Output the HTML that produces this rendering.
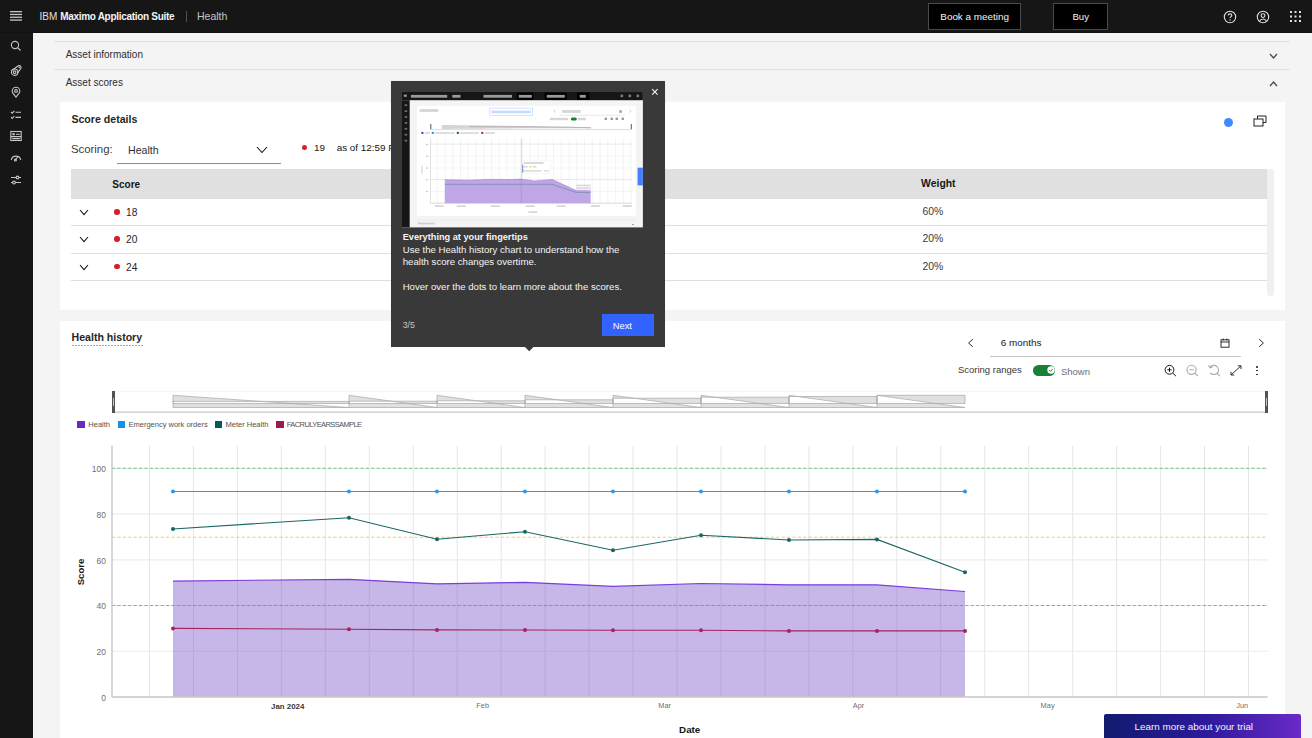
<!DOCTYPE html>
<html><head><meta charset="utf-8"><style>
html,body{margin:0;padding:0;width:1312px;height:738px;overflow:hidden;background:#f4f4f4;font-family:"Liberation Sans", sans-serif;}
.r{position:absolute;}
.t{position:absolute;white-space:nowrap;}
svg.r{overflow:visible;}
</style></head><body>
<div class="r" style="left:33px;top:33px;width:1279px;height:705px;background:#f4f4f4;"></div>
<div class="r" style="left:54px;top:41px;width:1236px;height:1px;background:#e0e0e0;"></div>
<div class="t" style="left:65.70px;top:48.73px;font-size:10px;line-height:12.00px;color:#2e2e2e;font-weight:400;">Asset information</div>
<svg class="r" style="left:1269.2px;top:53px" width="9" height="6" viewBox="0 0 9 6"><path d="M1 1 L4.5 5 L8 1" fill="none" stroke="#4a4a4a" stroke-width="1.3"/></svg>
<div class="r" style="left:54px;top:69px;width:1236px;height:1px;background:#e0e0e0;"></div>
<div class="t" style="left:65.70px;top:77.13px;font-size:10px;line-height:12.00px;color:#2e2e2e;font-weight:400;">Asset scores</div>
<svg class="r" style="left:1269.2px;top:80.8px" width="9" height="6" viewBox="0 0 9 6"><path d="M1 5 L4.5 1 L8 5" fill="none" stroke="#4a4a4a" stroke-width="1.3"/></svg>
<div class="r" style="left:60px;top:102px;width:1225px;height:208px;background:#ffffff;"></div>
<div class="t" style="left:71.40px;top:112.96px;font-size:10.6px;line-height:12.72px;color:#262626;font-weight:700;">Score details</div>
<div class="r" style="left:1223.5px;top:117.5px;width:9px;height:9px;border-radius:50%;background:#4589ff"></div>
<svg class="r" style="left:1253px;top:115px" width="14" height="12" viewBox="0 0 14 12"><path d="M4.5 3.8 V1 H13 V7.5 H10" fill="none" stroke="#161616" stroke-width="0.95"/><rect x="1" y="4" width="9" height="7" fill="none" stroke="#161616" stroke-width="0.95"/></svg>
<div class="t" style="left:70.90px;top:143.21px;font-size:11.4px;line-height:13.68px;color:#393939;font-weight:400;">Scoring:</div>
<div class="t" style="left:128.00px;top:144.46px;font-size:10.6px;line-height:12.72px;color:#2e2e2e;font-weight:400;">Health</div>
<svg class="r" style="left:256px;top:145.5px" width="12" height="7.5" viewBox="0 0 12 7.5"><path d="M1 1 L6.0 6.5 L11 1" fill="none" stroke="#161616" stroke-width="1.1"/></svg>
<div class="r" style="left:117px;top:163px;width:164px;height:1px;background:#8d8d8d;"></div>
<div class="r" style="left:301.5px;top:144.5px;width:5px;height:5px;border-radius:50%;background:#da1e28"></div>
<div class="t" style="left:314.00px;top:142.13px;font-size:9.9px;line-height:11.88px;color:#161616;font-weight:400;">19</div>
<div class="t" style="left:336.70px;top:142.13px;font-size:9.9px;line-height:11.88px;color:#161616;font-weight:400;">as of 12:59 PM</div>
<div class="r" style="left:71px;top:169px;width:1196px;height:29.5px;background:#e0e0e0;"></div>
<div class="t" style="left:112.30px;top:178.53px;font-size:10px;line-height:12.00px;color:#161616;font-weight:700;">Score</div>
<div class="t" style="left:921.10px;top:177.95px;font-size:10.4px;line-height:12.48px;color:#161616;font-weight:700;">Weight</div>
<svg class="r" style="left:79px;top:208.7px" width="10" height="6.6" viewBox="0 0 10 6.6"><path d="M1 1 L5.0 5.6 L9 1" fill="none" stroke="#161616" stroke-width="1.1"/></svg>
<div class="r" style="left:114px;top:209.0px;width:5.5px;height:5.5px;border-radius:50%;background:#da1e28"></div>
<div class="t" style="left:126.00px;top:206.74px;font-size:10.2px;line-height:12.24px;color:#262626;font-weight:400;">18</div>
<div class="t" style="left:922.40px;top:205.95px;font-size:10.4px;line-height:12.48px;color:#393939;font-weight:400;">60%</div>
<div class="r" style="left:71px;top:225px;width:1196px;height:1px;background:#e0e0e0;"></div>
<svg class="r" style="left:79px;top:236.1px" width="10" height="6.6" viewBox="0 0 10 6.6"><path d="M1 1 L5.0 5.6 L9 1" fill="none" stroke="#161616" stroke-width="1.1"/></svg>
<div class="r" style="left:114px;top:236.4px;width:5.5px;height:5.5px;border-radius:50%;background:#da1e28"></div>
<div class="t" style="left:126.00px;top:234.24px;font-size:10.2px;line-height:12.24px;color:#262626;font-weight:400;">20</div>
<div class="t" style="left:922.40px;top:233.45px;font-size:10.4px;line-height:12.48px;color:#393939;font-weight:400;">20%</div>
<div class="r" style="left:71px;top:253px;width:1196px;height:1px;background:#e0e0e0;"></div>
<svg class="r" style="left:79px;top:263.5px" width="10" height="6.6" viewBox="0 0 10 6.6"><path d="M1 1 L5.0 5.6 L9 1" fill="none" stroke="#161616" stroke-width="1.1"/></svg>
<div class="r" style="left:114px;top:263.8px;width:5.5px;height:5.5px;border-radius:50%;background:#da1e28"></div>
<div class="t" style="left:126.00px;top:261.74px;font-size:10.2px;line-height:12.24px;color:#262626;font-weight:400;">24</div>
<div class="t" style="left:922.40px;top:260.95px;font-size:10.4px;line-height:12.48px;color:#393939;font-weight:400;">20%</div>
<div class="r" style="left:71px;top:280px;width:1196px;height:1px;background:#e0e0e0;"></div>
<div class="r" style="left:1267px;top:169px;width:7px;height:127px;border-radius:3px;background:#f0f0f0"></div>
<div class="r" style="left:60px;top:321px;width:1225px;height:417px;background:#ffffff;"></div>
<div class="t" style="left:71.50px;top:331.26px;font-size:10.6px;line-height:12.72px;color:#262626;font-weight:700;">Health history</div>
<div class="r" style="left:71.5px;top:344.8px;width:71px;height:1px;background:repeating-linear-gradient(90deg,#a8a8a8 0 2px,transparent 2px 3px)"></div>
<svg class="r" style="left:966px;top:338px" width="9" height="10" viewBox="0 0 9 10"><path d="M6.8 1.2 L2.6 5 L6.8 8.8" fill="none" stroke="#161616" stroke-width="0.9"/></svg>
<div class="t" style="left:1000.80px;top:336.93px;font-size:9.9px;line-height:11.88px;color:#161616;font-weight:400;">6 months</div>
<div class="r" style="left:990px;top:356px;width:251px;height:1px;background:#c6c6c6;"></div>
<svg class="r" style="left:1219.5px;top:337.5px" width="10" height="10" viewBox="0 0 10 10"><rect x="1" y="1.8" width="8" height="7.4" fill="none" stroke="#161616" stroke-width="0.9"/><path d="M1 4 H9 M3.2 0.6 V2.4 M6.8 0.6 V2.4" fill="none" stroke="#161616" stroke-width="0.9"/></svg>
<svg class="r" style="left:1257px;top:338px" width="9" height="10" viewBox="0 0 9 10"><path d="M2.2 1.2 L6.4 5 L2.2 8.8" fill="none" stroke="#161616" stroke-width="0.9"/></svg>
<div class="t" style="left:957.90px;top:364.21px;font-size:9.5px;line-height:11.40px;color:#393939;font-weight:400;">Scoring ranges</div>
<div class="r" style="left:1033px;top:364.7px;width:22.3px;height:11.2px;border-radius:6px;background:#198038"></div>
<svg class="r" style="left:1046.5px;top:366.3px" width="8" height="8" viewBox="0 0 8 8"><circle cx="4" cy="4" r="3.7" fill="#fff"/><path d="M2.2 4.1 L3.5 5.3 L5.8 2.8" fill="none" stroke="#198038" stroke-width="1"/></svg>
<div class="t" style="left:1060.90px;top:366.21px;font-size:9.5px;line-height:11.40px;color:#6f6f6f;font-weight:400;">Shown</div>
<svg class="r" style="left:1163px;top:363px" width="14" height="14" viewBox="0 0 14 14"><circle cx="6.5" cy="6.8" r="4.4" fill="none" stroke="#161616" stroke-width="1"/><path d="M9.7 10 L12.9 13.1 M4.4 6.8 H8.6 M6.5 4.7 V8.9" fill="none" stroke="#161616" stroke-width="1"/></svg>
<svg class="r" style="left:1185px;top:363px" width="14" height="14" viewBox="0 0 14 14"><circle cx="6.5" cy="6.8" r="4.6" fill="none" stroke="#a8a8a8" stroke-width="1.1"/><path d="M9.8 10.1 L13 13.2 M4.3 6.8 H8.7" fill="none" stroke="#a8a8a8" stroke-width="1.1"/></svg>
<svg class="r" style="left:1207px;top:363px" width="14" height="14" viewBox="0 0 14 14"><path d="M3 4.5 A4.6 4.6 0 1 1 3.3 9.8" fill="none" stroke="#a8a8a8" stroke-width="1.1"/><path d="M1.5 2.2 L3 4.8 L5.8 3.8" fill="none" stroke="#a8a8a8" stroke-width="1.1"/><path d="M9.9 10.4 L12.8 13.2" fill="none" stroke="#a8a8a8" stroke-width="1.1"/></svg>
<svg class="r" style="left:1230px;top:365px" width="12" height="11" viewBox="0 0 12 11"><path d="M1.3 9.7 L10.7 1.1 M1 10 V6.8 M1 10 H4.2 M11 0.8 H7.8 M11 0.8 V4" fill="none" stroke="#161616" stroke-width="0.9"/></svg>
<div class="r" style="left:1256.4px;top:365.70000000000005px;width:1.9px;height:1.9px;border-radius:50%;background:#161616"></div>
<div class="r" style="left:1256.4px;top:369.6px;width:1.9px;height:1.9px;border-radius:50%;background:#161616"></div>
<div class="r" style="left:1256.4px;top:373.5px;width:1.9px;height:1.9px;border-radius:50%;background:#161616"></div>
<svg class="r" style="left:0;top:0" width="1312" height="738"><line x1="115" y1="391.5" x2="1265" y2="391.5" stroke="#f2f2f2" stroke-width="0.8"/><line x1="113" y1="412.2" x2="1267" y2="412.2" stroke="#c6c6c6" stroke-width="1.3"/><path d="M173 395.3 L349 407.5 L173 407.5 Z M173 401.4 H349 V403.5 H173 Z" fill="#e0e0e0" fill-rule="evenodd" stroke="#a8a8a8" stroke-width="0.7"/><path d="M349 395.3 L437 407.5 L349 407.5 Z M349 401.2 H437 V403.5 H349 Z" fill="#e0e0e0" fill-rule="evenodd" stroke="#a8a8a8" stroke-width="0.7"/><path d="M437 395.3 L525 407.5 L437 407.5 Z M437 400.8 H525 V403.5 H437 Z" fill="#e0e0e0" fill-rule="evenodd" stroke="#a8a8a8" stroke-width="0.7"/><path d="M525 395.3 L613 407.5 L525 407.5 Z M525 399.8 H613 V403.5 H525 Z" fill="#e0e0e0" fill-rule="evenodd" stroke="#a8a8a8" stroke-width="0.7"/><path d="M613 395.3 L701 407.5 L613 407.5 Z M613 398.2 H701 V403.5 H613 Z" fill="#e0e0e0" fill-rule="evenodd" stroke="#a8a8a8" stroke-width="0.7"/><path d="M701 395.3 L789 407.5 L701 407.5 Z M701 397.2 H789 V403.5 H701 Z" fill="#e0e0e0" fill-rule="evenodd" stroke="#a8a8a8" stroke-width="0.7"/><path d="M789 395.3 L877 407.5 L789 407.5 Z M789 396.5 H877 V403.5 H789 Z" fill="#e0e0e0" fill-rule="evenodd" stroke="#a8a8a8" stroke-width="0.7"/><path d="M877 395.3 L965 407.5 L877 407.5 Z M877 395.3 H965 V403.5 H877 Z" fill="#e0e0e0" fill-rule="evenodd" stroke="#a8a8a8" stroke-width="0.7"/></svg>
<div class="r" style="left:112px;top:391.3px;width:3.1px;height:21.5px;background:#525252;"></div>
<div class="r" style="left:113.2px;top:398px;width:0.8px;height:8px;background:#c6c6c6;"></div>
<div class="r" style="left:1265px;top:391.3px;width:3.1px;height:21.5px;background:#525252;"></div>
<div class="r" style="left:1266.2px;top:398px;width:0.8px;height:8px;background:#c6c6c6;"></div>
<div class="r" style="left:77.3px;top:420.7px;width:7.3px;height:7.3px;background:#6929c4;"></div>
<div class="t" style="left:88.30px;top:420.10px;font-size:7.5px;line-height:9.00px;color:#525252;font-weight:400;">Health</div>
<div class="r" style="left:117.6px;top:420.7px;width:7.3px;height:7.3px;background:#1192e8;"></div>
<div class="t" style="left:128.50px;top:420.10px;font-size:7.5px;line-height:9.00px;color:#525252;font-weight:400;">Emergency work orders</div>
<div class="r" style="left:214.5px;top:420.7px;width:7.3px;height:7.3px;background:#005d5d;"></div>
<div class="t" style="left:225.50px;top:420.10px;font-size:7.5px;line-height:9.00px;color:#525252;font-weight:400;">Meter Health</div>
<div class="r" style="left:276.3px;top:420.7px;width:7.3px;height:7.3px;background:#9f1853;"></div>
<div class="t" style="left:286.80px;top:420.10px;font-size:7.5px;line-height:9.00px;color:#525252;font-weight:400;letter-spacing:-0.6px;">FACRULYEARSSAMPLE</div>
<svg class="r" style="left:0;top:0" width="1312" height="738"><line x1="149.50" y1="445.6" x2="149.50" y2="697" stroke="#e6e6e6" stroke-width="1"/><line x1="193.46" y1="445.6" x2="193.46" y2="697" stroke="#e6e6e6" stroke-width="1"/><line x1="237.42" y1="445.6" x2="237.42" y2="697" stroke="#e6e6e6" stroke-width="1"/><line x1="281.38" y1="445.6" x2="281.38" y2="697" stroke="#e6e6e6" stroke-width="1"/><line x1="325.34" y1="445.6" x2="325.34" y2="697" stroke="#e6e6e6" stroke-width="1"/><line x1="369.30" y1="445.6" x2="369.30" y2="697" stroke="#e6e6e6" stroke-width="1"/><line x1="413.26" y1="445.6" x2="413.26" y2="697" stroke="#e6e6e6" stroke-width="1"/><line x1="457.22" y1="445.6" x2="457.22" y2="697" stroke="#e6e6e6" stroke-width="1"/><line x1="501.18" y1="445.6" x2="501.18" y2="697" stroke="#e6e6e6" stroke-width="1"/><line x1="545.14" y1="445.6" x2="545.14" y2="697" stroke="#e6e6e6" stroke-width="1"/><line x1="589.10" y1="445.6" x2="589.10" y2="697" stroke="#e6e6e6" stroke-width="1"/><line x1="633.06" y1="445.6" x2="633.06" y2="697" stroke="#e6e6e6" stroke-width="1"/><line x1="677.02" y1="445.6" x2="677.02" y2="697" stroke="#e6e6e6" stroke-width="1"/><line x1="720.98" y1="445.6" x2="720.98" y2="697" stroke="#e6e6e6" stroke-width="1"/><line x1="764.94" y1="445.6" x2="764.94" y2="697" stroke="#e6e6e6" stroke-width="1"/><line x1="808.90" y1="445.6" x2="808.90" y2="697" stroke="#e6e6e6" stroke-width="1"/><line x1="852.86" y1="445.6" x2="852.86" y2="697" stroke="#e6e6e6" stroke-width="1"/><line x1="896.82" y1="445.6" x2="896.82" y2="697" stroke="#e6e6e6" stroke-width="1"/><line x1="940.78" y1="445.6" x2="940.78" y2="697" stroke="#e6e6e6" stroke-width="1"/><line x1="984.74" y1="445.6" x2="984.74" y2="697" stroke="#e6e6e6" stroke-width="1"/><line x1="1028.70" y1="445.6" x2="1028.70" y2="697" stroke="#e6e6e6" stroke-width="1"/><line x1="1072.66" y1="445.6" x2="1072.66" y2="697" stroke="#e6e6e6" stroke-width="1"/><line x1="1116.62" y1="445.6" x2="1116.62" y2="697" stroke="#e6e6e6" stroke-width="1"/><line x1="1160.58" y1="445.6" x2="1160.58" y2="697" stroke="#e6e6e6" stroke-width="1"/><line x1="1204.54" y1="445.6" x2="1204.54" y2="697" stroke="#e6e6e6" stroke-width="1"/><line x1="1248.50" y1="445.6" x2="1248.50" y2="697" stroke="#e6e6e6" stroke-width="1"/><line x1="112" y1="651.26" x2="1267.7" y2="651.26" stroke="#ececec" stroke-width="1.2"/><line x1="112" y1="605.52" x2="1267.7" y2="605.52" stroke="#ececec" stroke-width="1.2"/><line x1="112" y1="559.78" x2="1267.7" y2="559.78" stroke="#ececec" stroke-width="1.2"/><line x1="112" y1="514.04" x2="1267.7" y2="514.04" stroke="#ececec" stroke-width="1.2"/><line x1="112" y1="468.30" x2="1267.7" y2="468.30" stroke="#ececec" stroke-width="1.2"/><polygon points="173,697 173,581.1 349,579.3 437,583.8 525,582.3 613,586.4 701,583.5 789,584.8 877,584.8 965,591.5 965,697" fill="#7348c5" fill-opacity="0.4"/><polyline points="173,581.1 349,579.3 437,583.8 525,582.3 613,586.4 701,583.5 789,584.8 877,584.8 965,591.5" fill="none" stroke="#7a3de0" stroke-width="1.2"/><line x1="112" y1="468.3" x2="1267.7" y2="468.3" stroke="#42be65" stroke-opacity="0.6" stroke-width="1.15" stroke-dasharray="3.2 2.2"/><line x1="112" y1="537.2" x2="1267.7" y2="537.2" stroke="#f1c21b" stroke-opacity="0.75" stroke-width="1.15" stroke-dasharray="3.2 2.2"/><line x1="112" y1="605.5" x2="1267.7" y2="605.5" stroke="#fa4d56" stroke-opacity="0.7" stroke-width="1.15" stroke-dasharray="3.2 2.2"/><polyline points="173,491.5 349,491.5 437,491.5 525,491.5 613,491.5 701,491.5 789,491.5 877,491.5 965,491.5" fill="none" stroke="#2f95e6" stroke-width="1.1"/><circle cx="173" cy="491.5" r="2" fill="#2f95e6"/><circle cx="349" cy="491.5" r="2" fill="#2f95e6"/><circle cx="437" cy="491.5" r="2" fill="#2f95e6"/><circle cx="525" cy="491.5" r="2" fill="#2f95e6"/><circle cx="613" cy="491.5" r="2" fill="#2f95e6"/><circle cx="701" cy="491.5" r="2" fill="#2f95e6"/><circle cx="789" cy="491.5" r="2" fill="#2f95e6"/><circle cx="877" cy="491.5" r="2" fill="#2f95e6"/><circle cx="965" cy="491.5" r="2" fill="#2f95e6"/><polyline points="173,529 349,517.7 437,539.3 525,531.7 613,550.3 701,535.2 789,540 877,539.4 965,572.3" fill="none" stroke="#1a6666" stroke-width="1.1"/><circle cx="173" cy="529" r="2" fill="#1a6666"/><circle cx="349" cy="517.7" r="2" fill="#1a6666"/><circle cx="437" cy="539.3" r="2" fill="#1a6666"/><circle cx="525" cy="531.7" r="2" fill="#1a6666"/><circle cx="613" cy="550.3" r="2" fill="#1a6666"/><circle cx="701" cy="535.2" r="2" fill="#1a6666"/><circle cx="789" cy="540" r="2" fill="#1a6666"/><circle cx="877" cy="539.4" r="2" fill="#1a6666"/><circle cx="965" cy="572.3" r="2" fill="#1a6666"/><polyline points="173,628.4 349,629.3 437,629.9 525,630 613,630.3 701,630.3 789,630.9 877,630.9 965,630.9" fill="none" stroke="#a3255c" stroke-width="1.1"/><circle cx="173" cy="628.4" r="2" fill="#a3255c"/><circle cx="349" cy="629.3" r="2" fill="#a3255c"/><circle cx="437" cy="629.9" r="2" fill="#a3255c"/><circle cx="525" cy="630" r="2" fill="#a3255c"/><circle cx="613" cy="630.3" r="2" fill="#a3255c"/><circle cx="701" cy="630.3" r="2" fill="#a3255c"/><circle cx="789" cy="630.9" r="2" fill="#a3255c"/><circle cx="877" cy="630.9" r="2" fill="#a3255c"/><circle cx="965" cy="630.9" r="2" fill="#a3255c"/><line x1="112" y1="445.6" x2="112" y2="697" stroke="#c6c6c6" stroke-width="1.4"/><line x1="112" y1="697" x2="1267.7" y2="697" stroke="#c6c6c6" stroke-width="1.4"/></svg>
<div class="t" style="left:106.00px;top:692.75px;font-size:8.5px;line-height:10.20px;color:#6f6f6f;font-weight:400;transform:translateX(-100%);">0</div>
<div class="t" style="left:106.00px;top:647.01px;font-size:8.5px;line-height:10.20px;color:#6f6f6f;font-weight:400;transform:translateX(-100%);">20</div>
<div class="t" style="left:106.00px;top:601.27px;font-size:8.5px;line-height:10.20px;color:#6f6f6f;font-weight:400;transform:translateX(-100%);">40</div>
<div class="t" style="left:106.00px;top:555.53px;font-size:8.5px;line-height:10.20px;color:#6f6f6f;font-weight:400;transform:translateX(-100%);">60</div>
<div class="t" style="left:106.00px;top:509.79px;font-size:8.5px;line-height:10.20px;color:#6f6f6f;font-weight:400;transform:translateX(-100%);">80</div>
<div class="t" style="left:106.00px;top:464.05px;font-size:8.5px;line-height:10.20px;color:#6f6f6f;font-weight:400;transform:translateX(-100%);">100</div>
<div class="t" style="left:80.9px;top:571.5px;font-size:9.6px;line-height:10px;font-weight:700;color:#161616;transform:translate(-50%,-50%) rotate(-90deg)">Score</div>
<div class="t" style="left:287.70px;top:701.52px;font-size:7.9px;line-height:9.48px;color:#393939;font-weight:700;transform:translateX(-50%);">Jan 2024</div>
<div class="t" style="left:482.70px;top:702.49px;font-size:7.4px;line-height:8.88px;color:#6f6f6f;font-weight:400;transform:translateX(-50%);">Feb</div>
<div class="t" style="left:664.60px;top:702.49px;font-size:7.4px;line-height:8.88px;color:#6f6f6f;font-weight:400;transform:translateX(-50%);">Mar</div>
<div class="t" style="left:858.50px;top:702.49px;font-size:7.4px;line-height:8.88px;color:#6f6f6f;font-weight:400;transform:translateX(-50%);">Apr</div>
<div class="t" style="left:1047.60px;top:702.49px;font-size:7.4px;line-height:8.88px;color:#6f6f6f;font-weight:400;transform:translateX(-50%);">May</div>
<div class="t" style="left:1242.20px;top:702.49px;font-size:7.4px;line-height:8.88px;color:#6f6f6f;font-weight:400;transform:translateX(-50%);">Jun</div>
<div class="t" style="left:689.70px;top:723.92px;font-size:9.8px;line-height:11.76px;color:#161616;font-weight:700;transform:translateX(-50%);">Date</div>
<div class="r" style="left:1104.4px;top:714.4px;width:196.6px;height:24px;border-radius:2px 2px 0 0;background:linear-gradient(90deg,#121a6e 0%,#2b1a9a 50%,#6a2ac8 100%)"></div>
<div class="t" style="left:1134.50px;top:720.63px;font-size:9.9px;line-height:11.88px;color:#f4f4f4;font-weight:400;">Learn more about your trial</div>
<div class="r" style="left:391.4px;top:81.2px;width:273.8px;height:265.5px;background:#393939;box-shadow:0 0 1px rgba(0,0,0,0.15)"></div>
<svg class="r" style="left:524.5px;top:346.5px" width="9" height="5" viewBox="0 0 9 5"><path d="M0 0 L4.2 4.3 L8.4 0 Z" fill="#393939"/></svg>
<svg class="r" style="left:650.5px;top:88.2px" width="8" height="8" viewBox="0 0 8 8"><path d="M1.2 1.2 L6.6 6.6 M6.6 1.2 L1.2 6.6" stroke="#f4f4f4" stroke-width="1.1"/></svg>
<svg class="r" style="left:402.2px;top:92.2px" width="240.9" height="135.4" viewBox="0 0 240.9 135.4"><rect x="0.00" y="0.00" width="240.90" height="135.40" fill="#f4f4f4" /><rect x="0.00" y="0.00" width="240.90" height="8.20" fill="#161616" /><rect x="0.00" y="8.20" width="7.70" height="127.20" fill="#161616" /><rect x="1.80" y="2.60" width="3.00" height="2.20" fill="#9a9a9a" /><rect x="8.90" y="2.90" width="36.30" height="2.80" fill="#9a9a9a" /><rect x="50.30" y="2.90" width="8.20" height="2.80" fill="#9a9a9a" /><rect x="81.50" y="2.90" width="28.50" height="2.80" fill="#9a9a9a" /><rect x="114.80" y="0.60" width="16.50" height="7.40" fill="#000000" /><rect x="116.80" y="2.90" width="13.00" height="2.80" fill="#9a9a9a" /><rect x="142.60" y="0.60" width="22.20" height="7.40" fill="#000000" /><rect x="144.80" y="2.90" width="18.00" height="2.80" fill="#9a9a9a" /><rect x="175.00" y="0.60" width="12.40" height="7.40" fill="#000000" /><rect x="177.80" y="2.90" width="6.00" height="2.80" fill="#9a9a9a" /><rect x="218.50" y="2.60" width="2.60" height="2.60" fill="#7a7a7a" /><rect x="226.50" y="2.60" width="2.60" height="2.60" fill="#7a7a7a" /><rect x="234.50" y="2.60" width="2.60" height="2.60" fill="#7a7a7a" /><rect x="2.60" y="12.30" width="2.60" height="1.80" fill="#6a6a6a" /><rect x="2.60" y="18.20" width="2.60" height="1.80" fill="#6a6a6a" /><rect x="2.60" y="24.10" width="2.60" height="1.80" fill="#6a6a6a" /><rect x="2.60" y="30.00" width="2.60" height="1.80" fill="#6a6a6a" /><rect x="2.60" y="35.90" width="2.60" height="1.80" fill="#6a6a6a" /><rect x="2.60" y="41.80" width="2.60" height="1.80" fill="#6a6a6a" /><rect x="2.60" y="47.70" width="2.60" height="1.80" fill="#6a6a6a" /><rect x="15.10" y="13.80" width="218.70" height="110.00" fill="#ffffff" /><rect x="17.60" y="17.10" width="18.70" height="2.80" fill="#d6d6d6" /><rect x="87.80" y="16.10" width="42.5" height="7.4" fill="#ffffff" stroke="#a6c8ff" stroke-width="0.5"/><rect x="89.30" y="18.60" width="39.50" height="2.60" fill="#c6dcff" /><line x1="153.30" y1="18.30" x2="152.00" y2="19.40" stroke="#8d8d8d" stroke-width="0.5" /><line x1="152.00" y1="19.40" x2="153.30" y2="20.60" stroke="#8d8d8d" stroke-width="0.5" /><rect x="160.10" y="18.10" width="18.70" height="2.80" fill="#d6d6d6" /><line x1="157.80" y1="23.30" x2="222.80" y2="23.30" stroke="#c6c6c6" stroke-width="0.4" /><rect x="217.30" y="18.30" width="2.50" height="2.50" fill="#9a9a9a" /><line x1="227.60" y1="18.30" x2="228.80" y2="19.40" stroke="#8d8d8d" stroke-width="0.5" /><line x1="228.80" y1="19.40" x2="227.60" y2="20.60" stroke="#8d8d8d" stroke-width="0.5" /><rect x="147.80" y="25.80" width="18.50" height="2.40" fill="#d6d6d6" /><rect x="168.80" y="25.40" width="6" height="3" rx="1.5" fill="#198038"/><rect x="175.80" y="25.80" width="8.00" height="2.40" fill="#d6d6d6" /><rect x="202.60" y="25.60" width="2.40" height="2.40" fill="#9a9a9a" /><rect x="208.60" y="25.60" width="2.40" height="2.40" fill="#9a9a9a" /><rect x="213.60" y="25.60" width="2.40" height="2.40" fill="#9a9a9a" /><rect x="219.60" y="25.60" width="2.40" height="2.40" fill="#9a9a9a" /><rect x="28.30" y="32.00" width="1.00" height="5.40" fill="#555555" /><rect x="228.80" y="32.00" width="1.00" height="5.40" fill="#555555" /><path d="M39.80 33.00 C 77.80 33.40, 137.80 34.20, 188.80 35.20 L 188.80 36.40 C 137.80 36.20, 77.80 36.60, 39.80 37.00 Z" fill="#d4d4d4"/><path d="M67.80 34.60 C 117.80 34.70, 157.80 35.00, 188.80 35.70" fill="none" stroke="#a0a0a0" stroke-width="0.6"/><line x1="28.80" y1="37.60" x2="229.30" y2="37.60" stroke="#c6c6c6" stroke-width="0.6" /><rect x="19.40" y="39.90" width="2.00" height="2.00" fill="#6929c4" /><rect x="22.80" y="40.10" width="5.00" height="1.80" fill="#dcdcdc" /><rect x="29.80" y="39.90" width="2.00" height="2.00" fill="#1192e8" /><rect x="32.80" y="40.10" width="20.00" height="1.80" fill="#dcdcdc" /><rect x="54.80" y="39.90" width="2.00" height="2.00" fill="#005d5d" /><rect x="57.80" y="40.10" width="19.00" height="1.80" fill="#dcdcdc" /><rect x="79.30" y="39.90" width="2.00" height="2.00" fill="#9f1853" /><rect x="82.80" y="40.10" width="10.00" height="1.80" fill="#dcdcdc" /><line x1="35.30" y1="46.20" x2="35.30" y2="111.20" stroke="#e4e4e4" stroke-width="0.4" /><line x1="43.05" y1="46.20" x2="43.05" y2="111.20" stroke="#e4e4e4" stroke-width="0.4" /><line x1="50.80" y1="46.20" x2="50.80" y2="111.20" stroke="#e4e4e4" stroke-width="0.4" /><line x1="58.55" y1="46.20" x2="58.55" y2="111.20" stroke="#e4e4e4" stroke-width="0.4" /><line x1="66.30" y1="46.20" x2="66.30" y2="111.20" stroke="#e4e4e4" stroke-width="0.4" /><line x1="74.05" y1="46.20" x2="74.05" y2="111.20" stroke="#e4e4e4" stroke-width="0.4" /><line x1="81.80" y1="46.20" x2="81.80" y2="111.20" stroke="#e4e4e4" stroke-width="0.4" /><line x1="89.55" y1="46.20" x2="89.55" y2="111.20" stroke="#e4e4e4" stroke-width="0.4" /><line x1="97.30" y1="46.20" x2="97.30" y2="111.20" stroke="#e4e4e4" stroke-width="0.4" /><line x1="105.05" y1="46.20" x2="105.05" y2="111.20" stroke="#e4e4e4" stroke-width="0.4" /><line x1="112.80" y1="46.20" x2="112.80" y2="111.20" stroke="#e4e4e4" stroke-width="0.4" /><line x1="120.55" y1="46.20" x2="120.55" y2="111.20" stroke="#e4e4e4" stroke-width="0.4" /><line x1="128.30" y1="46.20" x2="128.30" y2="111.20" stroke="#e4e4e4" stroke-width="0.4" /><line x1="136.05" y1="46.20" x2="136.05" y2="111.20" stroke="#e4e4e4" stroke-width="0.4" /><line x1="143.80" y1="46.20" x2="143.80" y2="111.20" stroke="#e4e4e4" stroke-width="0.4" /><line x1="151.55" y1="46.20" x2="151.55" y2="111.20" stroke="#e4e4e4" stroke-width="0.4" /><line x1="159.30" y1="46.20" x2="159.30" y2="111.20" stroke="#e4e4e4" stroke-width="0.4" /><line x1="167.05" y1="46.20" x2="167.05" y2="111.20" stroke="#e4e4e4" stroke-width="0.4" /><line x1="174.80" y1="46.20" x2="174.80" y2="111.20" stroke="#e4e4e4" stroke-width="0.4" /><line x1="182.55" y1="46.20" x2="182.55" y2="111.20" stroke="#e4e4e4" stroke-width="0.4" /><line x1="190.30" y1="46.20" x2="190.30" y2="111.20" stroke="#e4e4e4" stroke-width="0.4" /><line x1="198.05" y1="46.20" x2="198.05" y2="111.20" stroke="#e4e4e4" stroke-width="0.4" /><line x1="205.80" y1="46.20" x2="205.80" y2="111.20" stroke="#e4e4e4" stroke-width="0.4" /><line x1="213.55" y1="46.20" x2="213.55" y2="111.20" stroke="#e4e4e4" stroke-width="0.4" /><line x1="221.30" y1="46.20" x2="221.30" y2="111.20" stroke="#e4e4e4" stroke-width="0.4" /><line x1="229.05" y1="46.20" x2="229.05" y2="111.20" stroke="#e4e4e4" stroke-width="0.4" /><line x1="28.50" y1="99.45" x2="229.80" y2="99.45" stroke="#e6e6e6" stroke-width="0.4" /><rect x="23.80" y="98.95" width="2.50" height="1.20" fill="#cfcfcf" /><line x1="28.50" y1="87.70" x2="229.80" y2="87.70" stroke="#e6e6e6" stroke-width="0.4" /><rect x="23.80" y="87.20" width="2.50" height="1.20" fill="#cfcfcf" /><line x1="28.50" y1="75.95" x2="229.80" y2="75.95" stroke="#e6e6e6" stroke-width="0.4" /><rect x="23.80" y="75.45" width="2.50" height="1.20" fill="#cfcfcf" /><line x1="28.50" y1="64.20" x2="229.80" y2="64.20" stroke="#e6e6e6" stroke-width="0.4" /><rect x="23.80" y="63.70" width="2.50" height="1.20" fill="#cfcfcf" /><rect x="23.80" y="51.90" width="2.50" height="1.20" fill="#cfcfcf" /><line x1="28.50" y1="52.10" x2="229.80" y2="52.10" stroke="#b9dcc3" stroke-width="0.4" /><line x1="28.50" y1="69.90" x2="229.80" y2="69.90" stroke="#f6f0d8" stroke-width="0.35" /><line x1="28.50" y1="87.60" x2="229.80" y2="87.60" stroke="#f3c7ca" stroke-width="0.4" /><path d="M42.80 111.20 L42.80 87.70 L67.80 88.20 L87.80 87.30 L107.80 87.60 L119.30 87.00 L132.80 89.10 L150.30 87.40 L174.30 98.50 L188.70 98.70 L188.70 111.20 Z" fill="#bfa6e6"/><polyline points="42.80,87.70 67.80,88.20 87.80,87.30 107.80,87.60 119.30,87.00 132.80,89.10 150.30,87.40 174.30,98.50 188.70,98.70" fill="none" stroke="#8a5ad6" stroke-width="0.4"/><polyline points="42.80,92.30 150.30,92.30 174.30,100.40 188.70,100.40" fill="none" stroke="#3b7a7a" stroke-width="0.45"/><line x1="174.30" y1="93.30" x2="188.70" y2="93.30" stroke="#5aa6e0" stroke-width="0.5" /><line x1="174.30" y1="96.80" x2="188.70" y2="96.80" stroke="#e3a0b5" stroke-width="0.5" /><rect x="174.30" y="94.80" width="14.40" height="2.30" fill="#ead9e6" /><line x1="119.30" y1="46.20" x2="119.30" y2="111.20" stroke="#8a8a8a" stroke-width="0.35" /><line x1="28.50" y1="46.20" x2="28.50" y2="111.20" stroke="#c6c6c6" stroke-width="0.5" /><line x1="28.50" y1="111.20" x2="229.80" y2="111.20" stroke="#bdbdbd" stroke-width="0.6" /><rect x="120.40" y="68.60" width="28.2" height="13.1" fill="#ffffff" stroke="#eeeeee" stroke-width="0.4"/><rect x="121.60" y="70.20" width="20.00" height="1.50" fill="#cfcfcf" /><rect x="120.40" y="72.60" width="0.80" height="4.00" fill="#8a3ffc" /><rect x="120.40" y="76.60" width="0.80" height="4.00" fill="#007d79" /><rect x="121.80" y="74.10" width="4.00" height="1.40" fill="#d6d6d6" /><rect x="127.80" y="74.10" width="1.20" height="1.40" fill="#f1c21b" /><rect x="130.30" y="74.10" width="4.00" height="1.40" fill="#d6d6d6" /><rect x="121.80" y="78.30" width="17.50" height="1.20" fill="#cfcfcf" /><rect x="141.80" y="78.30" width="5.00" height="1.20" fill="#d6d6d6" /><rect x="32.80" y="113.30" width="9.00" height="1.60" fill="#d4d4d4" /><rect x="54.80" y="113.30" width="9.00" height="1.60" fill="#d4d4d4" /><rect x="88.80" y="113.30" width="9.00" height="1.60" fill="#d4d4d4" /><rect x="123.80" y="113.30" width="9.00" height="1.60" fill="#d4d4d4" /><rect x="154.80" y="113.30" width="9.00" height="1.60" fill="#d4d4d4" /><rect x="188.80" y="113.30" width="9.00" height="1.60" fill="#d4d4d4" /><rect x="220.80" y="113.30" width="9.00" height="1.60" fill="#d4d4d4" /><rect x="126.30" y="119.30" width="9.00" height="1.60" fill="#d4d4d4" /><rect x="19.30" y="73.80" width="1.20" height="8.00" fill="#d4d4d4" /><line x1="15.10" y1="128.10" x2="233.80" y2="128.10" stroke="#e0e0e0" stroke-width="0.4" /><rect x="15.80" y="130.60" width="17.00" height="1.80" fill="#d0d0d0" /><rect x="230.30" y="132.10" width="1.30" height="0.80" fill="#555555" /><rect x="235.60" y="75.70" width="5.30" height="17.70" fill="#4a7cff" /></svg>
<div class="t" style="left:402.70px;top:231.89px;font-size:9.2px;line-height:11.04px;color:#f4f4f4;font-weight:700;">Everything at your fingertips</div>
<div class="t" style="left:402.70px;top:243.56px;font-size:9.65px;line-height:11.58px;color:#f4f4f4;font-weight:400;">Use the Health history chart to understand how the</div>
<div class="t" style="left:402.70px;top:255.76px;font-size:9.65px;line-height:11.58px;color:#f4f4f4;font-weight:400;">health score changes overtime.</div>
<div class="t" style="left:402.70px;top:280.51px;font-size:9.6px;line-height:11.52px;color:#f4f4f4;font-weight:400;">Hover over the dots to learn more about the scores.</div>
<div class="t" style="left:402.70px;top:320.06px;font-size:8.7px;line-height:10.44px;color:#c6c6c6;font-weight:400;">3/5</div>
<div class="r" style="left:601.6px;top:314px;width:52.6px;height:21.6px;background:#3262ff;"></div>
<div class="t" style="left:612.70px;top:319.60px;font-size:9.4px;line-height:11.28px;color:#ffffff;font-weight:400;">Next</div>
<div class="r" style="left:0px;top:0px;width:1312px;height:32px;background:#161616;"></div>
<div class="r" style="left:0px;top:32px;width:1312px;height:1px;background:#121212;"></div>
<svg class="r" style="left:10px;top:11px" width="12" height="10" viewBox="0 0 12 10"><g fill="#c6c6c6"><rect x="0" y="0" width="12" height="1.3"/><rect x="0" y="2.8" width="12" height="1.3"/><rect x="0" y="5.6" width="12" height="1.3"/><rect x="0" y="8.4" width="12" height="1.3"/></g></svg>
<div class="t" style="left:39.60px;top:10.73px;font-size:10px;line-height:12.00px;color:#e0e0e0;font-weight:400;">IBM <b style="font-weight:700;color:#f4f4f4;letter-spacing:-0.3px">Maximo Application Suite</b></div>
<div class="r" style="left:186px;top:10.5px;width:1px;height:11.5px;background:#525252;"></div>
<div class="t" style="left:197.00px;top:10.26px;font-size:10.5px;line-height:12.60px;color:#c6c6c6;font-weight:400;">Health</div>
<div class="r" style="left:928.4px;top:3px;width:92.5px;height:27px;background:#000;border:1px solid #4a4a4a;box-sizing:border-box"></div>
<div class="t" style="left:940.30px;top:10.93px;font-size:9.9px;line-height:11.88px;color:#f4f4f4;font-weight:400;">Book a meeting</div>
<div class="r" style="left:1053.3px;top:3px;width:54.5px;height:27px;background:#000;border:1px solid #4a4a4a;box-sizing:border-box"></div>
<div class="t" style="left:1072.40px;top:11.21px;font-size:9.6px;line-height:11.52px;color:#f4f4f4;font-weight:400;">Buy</div>
<svg class="r" style="left:1222px;top:8.5px" width="16" height="16" viewBox="0 0 16 16"><circle cx="8" cy="8" r="5.7" fill="none" stroke="#e0e0e0" stroke-width="1.1"/><path d="M6.2 6.6 C6.2 5.5 7 4.9 8 4.9 C9 4.9 9.8 5.5 9.8 6.5 C9.8 7.6 8.1 7.8 8.1 9.1" fill="none" stroke="#e0e0e0" stroke-width="1.1"/><circle cx="8.1" cy="10.9" r="0.7" fill="#e0e0e0"/></svg>
<svg class="r" style="left:1255px;top:8.5px" width="16" height="16" viewBox="0 0 16 16"><circle cx="8" cy="8" r="5.7" fill="none" stroke="#e0e0e0" stroke-width="1.1"/><circle cx="8" cy="6.6" r="1.9" fill="none" stroke="#e0e0e0" stroke-width="1.1"/><path d="M4.6 12.2 C5.3 10.6 6.4 10 8 10 C9.6 10 10.7 10.6 11.4 12.2" fill="none" stroke="#e0e0e0" stroke-width="1.1"/></svg>
<svg class="r" style="left:1289px;top:10px" width="13" height="13" viewBox="0 0 13 13"><g fill="#e0e0e0"><rect x="1.0" y="1.0" width="2" height="2"/><rect x="1.0" y="5.5" width="2" height="2"/><rect x="1.0" y="10.0" width="2" height="2"/><rect x="5.5" y="1.0" width="2" height="2"/><rect x="5.5" y="5.5" width="2" height="2"/><rect x="5.5" y="10.0" width="2" height="2"/><rect x="10.0" y="1.0" width="2" height="2"/><rect x="10.0" y="5.5" width="2" height="2"/><rect x="10.0" y="10.0" width="2" height="2"/></g></svg>
<div class="r" style="left:0px;top:33px;width:33px;height:705px;background:#161616;"></div>
<svg class="r" style="left:9px;top:39px" width="14" height="14" viewBox="0 0 14 14"><circle cx="6" cy="6" r="3.6" fill="none" stroke="#c6c6c6" stroke-width="1.1"/><path d="M8.6 8.6 L11.5 11.5" fill="none" stroke="#c6c6c6" stroke-width="1.1"/></svg>
<svg class="r" style="left:9px;top:63px" width="14" height="14" viewBox="0 0 14 14"><path d="M3.2 7.2 L9.6 2.6 A1.9 1.9 0 0 1 12 5 L8.2 10.6" fill="none" stroke="#c6c6c6" stroke-width="1.1"/><circle cx="5.6" cy="9.2" r="3.2" fill="none" stroke="#c6c6c6" stroke-width="1.1"/><circle cx="5.6" cy="9.2" r="1.3" fill="none" stroke="#c6c6c6" stroke-width="1.1"/><circle cx="10.2" cy="4.4" r="0.8" fill="#c6c6c6"/></svg>
<svg class="r" style="left:9px;top:85px" width="14" height="14" viewBox="0 0 14 14"><path d="M7 12.2 L3.9 8.2 C3.4 7.5 3.2 6.8 3.2 6 C3.2 3.9 4.9 2.2 7 2.2 C9.1 2.2 10.8 3.9 10.8 6 C10.8 6.8 10.6 7.5 10.1 8.2 Z" fill="none" stroke="#c6c6c6" stroke-width="1.1"/><circle cx="7" cy="6" r="1.4" fill="none" stroke="#c6c6c6" stroke-width="1.1"/></svg>
<svg class="r" style="left:9px;top:108px" width="14" height="14" viewBox="0 0 14 14"><path d="M2 4 L3.2 5.2 L5.4 2.8 M2 9.2 L3.2 10.4 L5.4 8" fill="none" stroke="#c6c6c6" stroke-width="1.1"/><path d="M6.5 4.2 H12 M6.5 9.4 H12" fill="none" stroke="#c6c6c6" stroke-width="1.1"/></svg>
<svg class="r" style="left:9px;top:129px" width="14" height="14" viewBox="0 0 14 14"><rect x="1.8" y="2.5" width="10.4" height="9" fill="none" stroke="#c6c6c6" stroke-width="1.1"/><rect x="3.3" y="4.2" width="2.5" height="2" fill="#c6c6c6"/><path d="M7 5.2 H10.8 M1.8 7.6 H12.2 M3.3 9.6 H10.8" fill="none" stroke="#c6c6c6" stroke-width="1.1"/></svg>
<svg class="r" style="left:9px;top:149.5px" width="14" height="14" viewBox="0 0 14 14"><path d="M2.2 10 A4.9 4.9 0 0 1 11.8 10" fill="none" stroke="#c6c6c6" stroke-width="1.1"/><path d="M6.3 10 L9 6.5" fill="none" stroke="#c6c6c6" stroke-width="1.1"/><circle cx="6.4" cy="10" r="1" fill="none" stroke="#c6c6c6" stroke-width="1.1"/></svg>
<svg class="r" style="left:9px;top:173px" width="14" height="14" viewBox="0 0 14 14"><path d="M2 4.5 H12 M2 9.5 H12" fill="none" stroke="#c6c6c6" stroke-width="1.1"/><circle cx="8.5" cy="4.5" r="1.4" fill="#161616" stroke="#c6c6c6" stroke-width="1.1"/><circle cx="5" cy="9.5" r="1.4" fill="#161616" stroke="#c6c6c6" stroke-width="1.1"/></svg>
</body></html>
